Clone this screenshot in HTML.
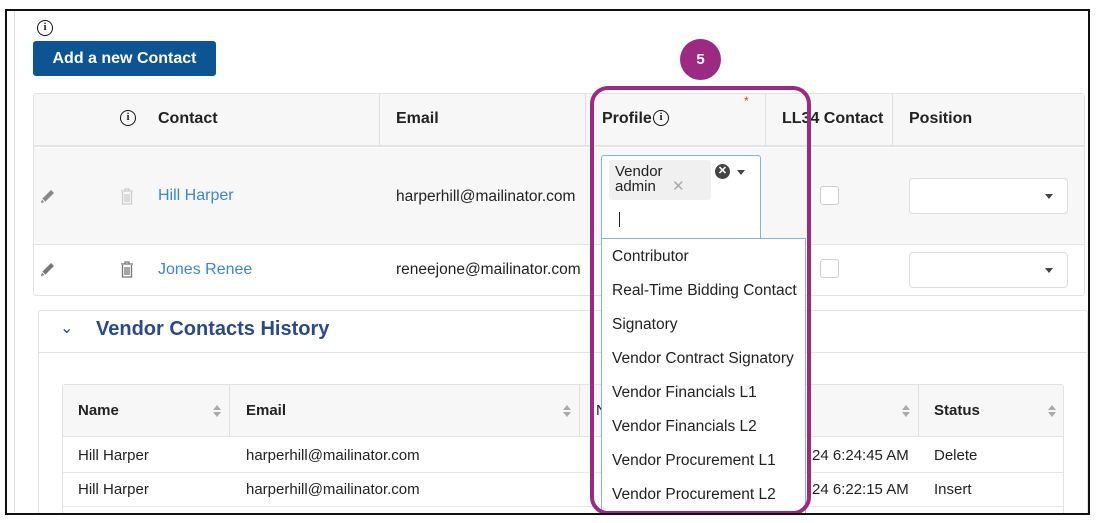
<!DOCTYPE html>
<html><head><style>
*{box-sizing:border-box;margin:0;padding:0}
body{width:1096px;height:523px;background:#fff;font-family:"Liberation Sans",sans-serif;position:relative;overflow:hidden;color:#222}
.a{position:absolute}
.t{font-size:15px;white-space:nowrap}
.b{font-weight:bold}
.info{position:absolute;width:16px;height:16px;border:1.7px solid #111;border-radius:50%;font:bold 11px "Liberation Serif",serif;text-align:center;line-height:13px}
.sel{position:absolute;background:#fff;border:1px solid #ddd;border-radius:4px}
.car{position:absolute;width:0;height:0;border-left:4px solid transparent;border-right:4px solid transparent;border-top:5px solid #444}
.cb{position:absolute;width:19px;height:19px;border:1px solid #ccc;border-radius:3px;background:#fff}
.sort{position:absolute;width:0;height:0;border-left:4px solid transparent;border-right:4px solid transparent}
</style></head><body>
<div class="a" style="left:14px;top:11px;width:1px;height:501px;background:#ddd"></div>
<div class="info" style="left:37px;top:20px">i</div>
<div class="a" style="left:33px;top:41px;width:183px;height:35px;background:#0d5592;border-radius:3px;color:#fff;font-weight:bold;font-size:16px;line-height:35px;text-align:center">Add a new Contact</div>

<div class="a" style="left:33px;top:93px;width:1052px;height:203px;border:1px solid #e2e2e2;border-radius:3px;background:#fff"></div>
<div class="a" style="left:34px;top:94px;width:1050px;height:53px;background:#f7f7f7;border-bottom:2px solid #e4e4e4"></div>
<div class="a" style="left:34px;top:148px;width:1050px;height:97px;background:#f7f7f7;border-bottom:1px solid #e4e4e4"></div>
<div class="a" style="left:379px;top:94px;width:1px;height:53px;background:#e0e0e0"></div>
<div class="a" style="left:585px;top:94px;width:1px;height:53px;background:#e0e0e0"></div>
<div class="a" style="left:765px;top:94px;width:1px;height:53px;background:#e0e0e0"></div>
<div class="a" style="left:892px;top:94px;width:1px;height:53px;background:#e0e0e0"></div>
<div class="info" style="left:120px;top:110px">i</div>
<div class="a t b" style="left:158px;top:110px;font-size:16px">Contact</div>
<div class="a t b" style="left:396px;top:110px;font-size:16px">Email</div>
<div class="a t b" style="left:602px;top:110px;font-size:16px">Profile</div>
<div class="info" style="left:653px;top:110px">i</div>
<div class="a" style="left:744px;top:94px;color:#e33;font-size:12px">*</div>
<div class="a t b" style="left:782px;top:110px;font-size:16px">LL34 Contact</div>
<div class="a t b" style="left:909px;top:110px;font-size:16px">Position</div>

<svg class="a" style="left:39px;top:188px" width="17" height="17"><path d="M3 11L12 2l3 3-9 9-4 1z" fill="#888"/><path d="M3 11l3 3" stroke="#fff" stroke-width="1"/></svg>
<svg class="a" style="left:39px;top:261px" width="17" height="17"><path d="M3 11L12 2l3 3-9 9-4 1z" fill="#777"/><path d="M3 11l3 3" stroke="#fff" stroke-width="1"/></svg>
<svg class="a" style="left:120px;top:188px" width="14" height="17"><path d="M1 3h12M5 3V1h4v2M2.5 4v12h9V4M5 6v8M7 6v8M9 6v8" fill="none" stroke="#ccc" stroke-width="1.3"/></svg>
<svg class="a" style="left:120px;top:261px" width="14" height="17"><path d="M1 3h12M5 3V1h4v2M2.5 4v12h9V4M5 6v8M7 6v8M9 6v8" fill="none" stroke="#777" stroke-width="1.3"/></svg>
<div class="a t" style="left:158px;top:187px;color:#3a87d6;font-size:16px">Hill Harper</div>
<div class="a t" style="left:158px;top:261px;color:#3a87d6;font-size:16px">Jones Renee</div>
<div class="a t" style="left:396px;top:188px;font-size:15.5px">harperhill@mailinator.com</div>
<div class="a t" style="left:396px;top:261px;font-size:15.5px">reneejone@mailinator.com</div>

<div class="cb" style="left:820px;top:186px"></div>
<div class="cb" style="left:820px;top:259px"></div>
<div class="sel" style="left:909px;top:178px;width:159px;height:36px"><div class="car" style="left:135px;top:15px"></div></div>
<div class="sel" style="left:909px;top:252px;width:159px;height:36px"><div class="car" style="left:135px;top:15px"></div></div>

<div class="a" style="left:38px;top:310px;width:1050px;height:210px;border:1px solid #e2e2e2;border-radius:3px"></div>
<div class="a" style="left:39px;top:352px;width:1048px;height:1px;background:#e4e4e4"></div>
<div class="a" style="left:60px;top:318px;color:#2a4a8a;font-size:16px">⌄</div>
<div class="a" style="left:96px;top:318px;color:#2a4a8a;font-size:20px;font-weight:bold">Vendor Contacts History</div>
<div class="a" style="left:62px;top:384px;width:1002px;height:135px;border:1px solid #e2e2e2;border-radius:3px"></div>
<div class="a" style="left:63px;top:385px;width:1000px;height:52px;background:#f7f7f7;border-bottom:1px solid #e4e4e4"></div>
<div class="a" style="left:63px;top:472px;width:1000px;height:1px;background:#e8e8e8"></div>
<div class="a" style="left:63px;top:506px;width:1000px;height:1px;background:#e8e8e8"></div>
<div class="a" style="left:229px;top:385px;width:1px;height:52px;background:#e0e0e0"></div>
<div class="a" style="left:579px;top:385px;width:1px;height:52px;background:#e0e0e0"></div>
<div class="a" style="left:918px;top:385px;width:1px;height:52px;background:#e0e0e0"></div>
<div class="a t b" style="left:78px;top:402px">Name</div>
<div class="a t b" style="left:246px;top:402px">Email</div>
<div class="a t b" style="left:934px;top:402px">Status</div>
<div class="a t" style="left:596px;top:402px">N</div>
<div class="sort" style="left:213px;top:405px;border-bottom:5px solid #aaa"></div><div class="sort" style="left:213px;top:412px;border-top:5px solid #aaa"></div>
<div class="sort" style="left:563px;top:405px;border-bottom:5px solid #aaa"></div><div class="sort" style="left:563px;top:412px;border-top:5px solid #aaa"></div>
<div class="sort" style="left:902px;top:405px;border-bottom:5px solid #aaa"></div><div class="sort" style="left:902px;top:412px;border-top:5px solid #aaa"></div>
<div class="sort" style="left:1048px;top:405px;border-bottom:5px solid #aaa"></div><div class="sort" style="left:1048px;top:412px;border-top:5px solid #aaa"></div>
<div class="a t" style="left:78px;top:447px">Hill Harper</div>
<div class="a t" style="left:246px;top:447px">harperhill@mailinator.com</div>
<div class="a t" style="left:812px;top:447px">24 6:24:45 AM</div>
<div class="a t" style="left:934px;top:447px">Delete</div>
<div class="a t" style="left:78px;top:481px">Hill Harper</div>
<div class="a t" style="left:246px;top:481px">harperhill@mailinator.com</div>
<div class="a t" style="left:812px;top:481px">24 6:22:15 AM</div>
<div class="a t" style="left:934px;top:481px">Insert</div>

<div class="a" style="left:601px;top:155px;width:160px;height:84px;background:#fff;border:1px solid #7fb6e6;border-radius:3px 3px 0 0"></div>
<div class="a" style="left:609px;top:160px;width:102px;height:40px;background:#f0f0f0;border-radius:3px"></div>
<div class="a t" style="left:615px;top:164px;line-height:15px">Vendor<br>admin <span style="color:#aaa;margin-left:12px">✕</span></div>
<div class="a" style="left:715px;top:164px;width:15px;height:15px;border-radius:50%;background:#444;color:#fff;font-size:11px;text-align:center;line-height:15px;font-weight:bold">✕</div>
<div class="car" style="left:737px;top:170px"></div>
<div class="a" style="left:619px;top:212px;width:1px;height:15px;background:#222"></div>
<div class="a" style="left:601px;top:238px;width:205px;height:280px;background:#fff;border:1px solid #7fb6e6"></div>
<div class="a t" style="left:612px;top:240px;line-height:34px;font-size:15.5px">Contributor<br>Real-Time Bidding Contact<br>Signatory<br>Vendor Contract Signatory<br>Vendor Financials L1<br>Vendor Financials L2<br>Vendor Procurement L1<br>Vendor Procurement L2</div>

<div class="a" style="left:590px;top:86px;width:221px;height:429px;border:4px solid #9c2a82;border-radius:18px"></div>
<div class="a" style="left:680px;top:39px;width:41px;height:41px;border-radius:50%;background:#9c2a82;color:#fff;font-weight:bold;font-size:15px;text-align:center;line-height:41px">5</div>

<div class="a" style="left:0;top:514px;width:1096px;height:9px;background:#fff"></div>
<div class="a" style="left:1089px;top:0;width:7px;height:523px;background:#fff"></div>
<div class="a" style="left:5px;top:9px;width:1085px;height:506px;border:2px solid #111"></div>
</body></html>
